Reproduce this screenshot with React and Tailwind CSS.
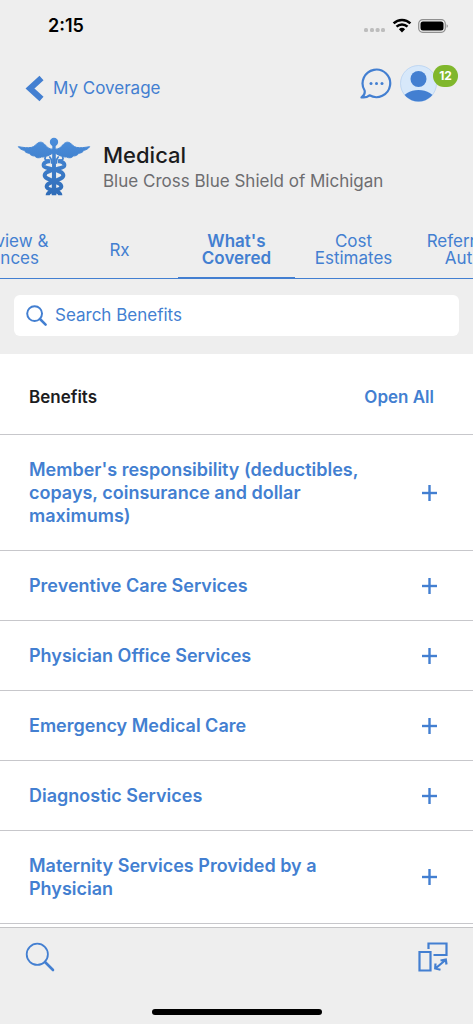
import React, { useState } from "react";

const TABS = [
  { id: "overview", lines: ["Overview &", "Balances"] },
  { id: "rx", lines: ["Rx"] },
  { id: "covered", lines: ["What's", "Covered"] },
  { id: "cost", lines: ["Cost", "Estimates"] },
  { id: "referrals", lines: ["Referrals &", "Auths."] },
];

const BENEFITS = [
  "Member's responsibility (deductibles, copays, coinsurance and dollar maximums)",
  "Preventive Care Services",
  "Physician Office Services",
  "Emergency Medical Care",
  "Diagnostic Services",
  "Maternity Services Provided by a Physician",
];

function StatusBar() {
  return (
    <div className="flex h-13 items-center justify-between pr-6 pl-12 text-black">
      <span className="text-lg font-semibold">2:15</span>
      <svg width="86" height="16" viewBox="0 0 86 16" aria-hidden="true">
        <g fill="#bdbdbd">
          <rect x="1" y="10" width="4" height="4" rx="1.500" />
          <rect x="7" y="10" width="4" height="4" rx="1.500" />
          <rect x="12.600" y="10" width="4" height="4" rx="1.500" />
          <rect x="18" y="10" width="4" height="4" rx="1.500" />
        </g>
        <g fill="none" stroke="#000" strokeWidth="2.500">
          <path d="M30.600 5.400a12 12 0 0 1 16.800 0" />
          <path d="M33.500 8.600a8 8 0 0 1 11 0" />
        </g>
        <path d="M35.900 11.200a4.600 4.600 0 0 1 6.200 0L39 14.400z" />
        <rect x="55.700" y="1.700" width="26.600" height="12.600" rx="4" fill="none" stroke="#8f8f8f" strokeWidth="1.200" />
        <rect x="57.500" y="3.500" width="23" height="9" rx="2.500" />
        <path d="M83.600 6.200c1.600.5 1.600 3.100 0 3.600z" fill="#8f8f8f" />
      </svg>
    </div>
  );
}

function ChatIcon() {
  return (
    <svg width="32" height="32" viewBox="0 0 32 32" aria-hidden="true">
      <path
        d="M4.600 22.500A13.800 13.800 0 1 1 9.500 27.300C7.500 29 4.500 29.800 1.500 29.300C3.800 27.800 5.200 25.300 4.600 22.500z"
        fill="none"
        stroke="#437fd1"
        strokeWidth="2.200"
        strokeLinejoin="round"
      />
      <g fill="#437fd1">
        <circle cx="11" cy="15.500" r="1.500" />
        <circle cx="16.500" cy="15.500" r="1.500" />
        <circle cx="22" cy="15.500" r="1.500" />
      </g>
    </svg>
  );
}

function AvatarIcon() {
  return (
    <svg width="37" height="37" viewBox="0 0 37 37" aria-hidden="true">
      <clipPath id="avatar-clip">
        <circle cx="18.500" cy="18.500" r="18" />
      </clipPath>
      <circle cx="18.500" cy="18.500" r="18" fill="#d7e8fa" stroke="#a9caf0" strokeWidth=".6" />
      <circle cx="18.500" cy="14" r="8" fill="#437fd1" />
      <ellipse cx="18.500" cy="35" rx="16" ry="10" fill="#437fd1" clipPath="url(#avatar-clip)" />
    </svg>
  );
}

function Caduceus() {
  return (
    <svg width="74" height="60" viewBox="4 10 222 180" aria-hidden="true">
      <defs>
        <linearGradient id="caduceus-fill" gradientUnits="userSpaceOnUse" x1="0" y1="14" x2="0" y2="186">
          <stop offset="0" stopColor="#4c8edb" />
          <stop offset="1" stopColor="#2f6cb8" />
        </linearGradient>
        <path
          id="wing"
          d="M112 47C99 46 94 40 88 33C82 26 75 23 67 28C60 32 57 39 48 41C36 44 22 41 8 39C13 46 19 49 26 50C28 56 34 58 41 59C44 65 51 67 57 67C62 73 70 74 77 70C86 71 100 66 112 58z"
        />
      </defs>
      <g fill="url(#caduceus-fill)">
        <g stroke="url(#caduceus-fill)" strokeWidth="3" strokeLinejoin="round">
          <use href="#wing" />
          <use href="#wing" transform="matrix(-1 0 0 1 230 0)" />
        </g>
        <circle cx="115" cy="25" r="12.500" />
        <path d="M110 34h10l2 151h-14z" />
      </g>
      <g fill="none" stroke="url(#caduceus-fill)" strokeLinecap="butt" strokeLinejoin="round">
        <path strokeWidth="12" d="M104 83C93 82 83 87 84 95C86 108 143 107 143 125C143 142 93 141 93 159C93 170 134 169 134 185" />
        <path strokeWidth="12" d="M126 83C137 82 147 87 146 95C144 108 87 107 87 125C87 142 137 141 137 159C137 170 96 169 96 185" />
        <path strokeWidth="5" d="M90 69C84 77 92 82 100 78M140 69C146 77 138 82 130 78" />
        <path strokeWidth="5" d="M101 68L108 79V90M129 68L122 79V90" />
      </g>
    </svg>
  );
}

function SearchIcon({ size, ring, handle }) {
  return (
    <svg width={size} height={size} viewBox="0 0 30 30" fill="none" stroke="#437fd1" aria-hidden="true">
      <circle cx="12.300" cy="12.300" r="10.600" strokeWidth={ring} />
      <path d="M20 20l8 8" strokeWidth={handle} strokeLinecap="round" />
    </svg>
  );
}

function RotateIcon() {
  return (
    <svg width="30" height="30" viewBox="0 0 30 30" fill="none" stroke="#437fd1" strokeWidth="2.200" aria-hidden="true">
      <path d="M1.500 10h11v18.500h-11z" />
      <path d="M10.500 7V1.500h18v11.500H15.500" />
      <path d="M18 26L27.500 18M22.500 18.500L27.800 17.500L28.500 22.500M17.500 21.500L17.200 26.500L22.500 27.700" />
    </svg>
  );
}

function BenefitRow({ title, open, onToggle }) {
  return (
    <li className="border-b border-[#c7c7cb]">
      <button
        type="button"
        aria-expanded={open}
        onClick={onToggle}
        className="flex w-full items-center justify-between py-[23px] pr-9 pl-[29px] text-left text-lg/[23px] font-semibold text-[#437fd1]"
      >
        <span className="max-w-[340px]">{title}</span>
        <svg width="15" height="16" viewBox="0 0 15 16" stroke="#437fd1" strokeWidth="2.400" aria-hidden="true">
          <path d="M0 8h15" />
          {!open && <path d="M7.500 0v16" />}
        </svg>
      </button>
    </li>
  );
}

export default function App() {
  const [activeTab, setActiveTab] = useState("covered");
  const [openRows, setOpenRows] = useState([]);

  const toggleRow = (title) => {
    setOpenRows((prev) =>
      prev.includes(title) ? prev.filter((t) => t !== title) : [...prev, title]
    );
  };

  return (
    <div className="flex h-screen flex-col overflow-hidden bg-[#eeeeee] font-['Inter',sans-serif] text-[#437fd1]">
      <StatusBar />

      <header className="shrink-0">
        <div className="flex items-end justify-between pt-[11px] pr-4 pl-[25px]">
          <a href="#coverage" className="flex items-center gap-2 pt-3 text-[17px]">
            <svg width="20" height="27" viewBox="0 0 20 27" aria-hidden="true">
              <path d="M16.500 3L5 13.500L16.500 24" fill="none" stroke="#437fd1" strokeWidth="6" />
            </svg>
            My Coverage
          </a>
          <div className="flex items-center gap-2">
            <button type="button" aria-label="Messages">
              <ChatIcon />
            </button>
            <button type="button" aria-label="Profile" className="relative mr-5">
              <AvatarIcon />
              <span className="absolute top-0 left-[33px] flex h-[22px] w-[25px] items-center justify-center rounded-full bg-[#80b72c] text-xs font-bold text-white">
                12
              </span>
            </button>
          </div>
        </div>

        <div className="flex items-center gap-3 px-[17px] pt-[35px]">
          <Caduceus />
          <div>
            <h1 className="text-[22px]/7 font-medium text-[#1c1c1e]">Medical</h1>
            <p className="text-[17px]/6 text-[#6d6d70]">Blue Cross Blue Shield of Michigan</p>
          </div>
        </div>

        <nav className="mt-6 flex justify-center overflow-hidden border-b border-[#437fd1]">
          {TABS.map((tab) => (
            <button
              key={tab.id}
              type="button"
              onClick={() => setActiveTab(tab.id)}
              className={`flex h-[57px] w-[117px] shrink-0 flex-col items-center justify-center border-b pt-0.5 text-[17px]/[17px] ${
                activeTab === tab.id ? "border-[#437fd1] font-semibold" : "border-transparent"
              }`}
            >
              {tab.lines.map((line) => (
                <span key={line}>{line}</span>
              ))}
            </button>
          ))}
        </nav>

        <div className="px-3.5 pt-4 pb-[18px]">
          <label className="flex h-[41px] items-center gap-2 rounded-md bg-white px-3">
            <SearchIcon size={21} ring={2.8} handle={3.6} />
            <input
              type="search"
              aria-label="Search Benefits"
              placeholder="Search Benefits"
              className="min-w-0 flex-1 bg-transparent text-[17px] outline-none placeholder:text-[#437fd1]"
            />
          </label>
        </div>
      </header>

      <main className="min-h-0 flex-1 overflow-hidden bg-white">
        <div className="flex h-[81px] items-center justify-between border-b border-[#c7c7cb] pt-2 pr-[39px] pl-[29px] text-[17px] font-semibold">
          <h2 className="text-[#1c1c1e]">Benefits</h2>
          <button type="button" onClick={() => setOpenRows(BENEFITS)}>
            Open All
          </button>
        </div>
        <ul>
          {BENEFITS.map((title) => (
            <BenefitRow
              key={title}
              title={title}
              open={openRows.includes(title)}
              onToggle={() => toggleRow(title)}
            />
          ))}
        </ul>
      </main>

      <footer className="shrink-0 border-t border-[#c4c4c6]">
        <div className="flex items-center justify-between px-[25px] pt-3.5">
          <button type="button" aria-label="Search">
            <SearchIcon size={30} ring={1.8} handle={2.6} />
          </button>
          <button type="button" aria-label="Rotate screen">
            <RotateIcon />
          </button>
        </div>
        <div className="mx-auto mt-[37px] mb-[9px] h-1.5 w-[170px] rounded-full bg-black" />
      </footer>
    </div>
  );
}
